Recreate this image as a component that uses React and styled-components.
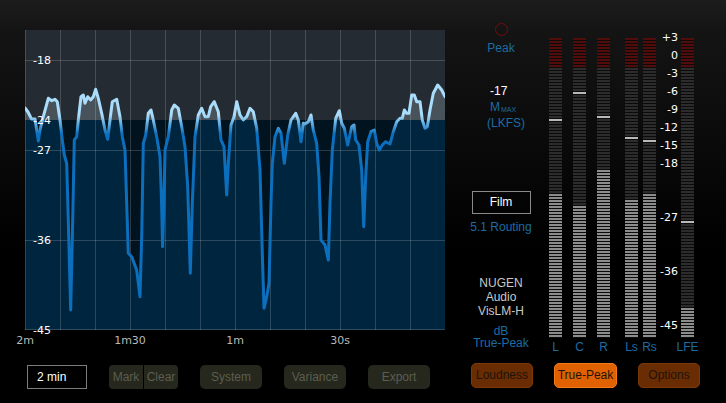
import React from "react";
import styled, { createGlobalStyle } from "styled-components";

const GlobalStyle = createGlobalStyle`
  html, body {
    margin: 0;
    padding: 0;
    background: #000;
  }
  body {
    font-family: "Liberation Sans", Arial, sans-serif;
  }
`;

// loudness history, page coordinates (chart spans x 25..445, y 30..330)
const HISTORY = [
  [25, 108], [28, 112], [31.5, 119], [35, 119], [36.7, 130], [38.3, 141], [40, 130],
  [43.3, 116.7], [48.3, 98.3], [51.7, 100.7], [55, 99.3], [57.3, 101.7], [60, 120],
  [62.3, 140], [64.3, 155], [66.7, 163.3], [68.3, 220], [70.7, 310], [72.7, 220],
  [74.3, 140], [76.7, 136.7], [78.3, 120], [81, 96.7], [83.3, 95], [85, 103.3],
  [87.7, 96.7], [90.7, 100], [93.3, 96.7], [95.7, 89.3], [98.3, 98.3], [101.7, 113.3],
  [105, 130], [107.7, 139.3], [110, 120], [112.3, 101.7], [116.7, 99.3], [120, 116.7],
  [122.3, 136.7], [125, 150], [126.7, 203.3], [128.3, 253.3], [131.7, 256.7],
  [136.7, 270], [140, 296.7], [141.7, 236.7], [143.3, 143.3], [145.7, 135],
  [148.3, 113.3], [151, 110], [153.3, 120], [156.7, 136.7], [160, 156.7],
  [161.5, 200], [162.6, 246.7], [164, 200], [165, 150], [168.3, 136.7], [171.7, 110],
  [174.3, 105], [178.3, 108.3], [181.7, 126.7], [185, 146.7], [187.7, 186.7],
  [190.3, 273.3], [192.3, 203.3], [195, 136.7], [198.3, 115], [201.7, 108.3],
  [205, 116.7], [208.3, 116.7], [210.7, 106.7], [214.3, 101.7], [218.3, 111.7],
  [221, 140], [224, 146.7], [226.7, 195], [228.3, 163.3], [231, 125], [234, 116.7],
  [236.7, 101.7], [240, 115], [243.3, 120], [246.7, 116.7], [250, 108.3],
  [253.3, 111.7], [256.7, 128.3], [260, 170], [262.3, 253.3], [264, 308.3],
  [266.7, 296.7], [269, 283.3], [271, 203.3], [272.3, 163.3], [275, 136.7],
  [278.3, 128.3], [281, 133.3], [284.3, 163.3], [287.7, 135], [291, 120],
  [295.7, 113.3], [298.3, 120], [301, 141.7], [303.3, 123.3], [305, 124],
  [308.3, 121.7], [311, 115], [313.3, 130], [316.7, 143.3], [319, 176.7], [321, 240],
  [325, 245], [328.3, 260], [330, 203.3], [332.3, 150], [335.7, 118.3],
  [339.3, 110.7], [341.7, 123.3], [344.3, 128.3], [347.7, 145], [351.7, 126.7],
  [354, 125], [355.7, 140], [359, 145], [361.7, 170], [363.7, 226.7], [365.7, 176.7],
  [367.7, 141.7], [371, 131.7], [374.3, 130], [376.7, 143.3], [379.3, 150],
  [382.3, 145], [385.7, 141.7], [390, 144], [393.3, 131.7], [396.7, 121.7],
  [400, 118.3], [402.3, 118.3], [404.3, 110], [406.7, 113.3], [409, 113.3],
  [411.7, 95], [414.3, 95], [416.7, 101.7], [420, 101.7], [422.3, 120], [425, 128.3],
  [427.3, 126.7], [430, 110], [433.3, 93.3], [437.7, 85], [441.7, 90], [445, 96.7],
];

const Y_MARKS = [
  { label: "-18", y: 61 },
  { label: "-24", y: 121 },
  { label: "-27", y: 151 },
  { label: "-36", y: 241 },
  { label: "-45", y: 331 },
];

const TIME_MARKS = ["2m", "1m30", "1m", "30s"];

const CHANNELS = [
  { name: "L", peak: 27, lit: 52, space: 0 },
  { name: "C", peak: 18, lit: 56, space: 11 },
  { name: "R", peak: 26, lit: 44, space: 11 },
  { name: "Ls", peak: 33, lit: 54, space: 15 },
  { name: "Rs", peak: 34, lit: 52, space: 5 },
];

const LFE = { name: "LFE", peak: 61, lit: 90, space: 0 };

const SCALE = [3, 0, -3, -6, -9, -12, -15, -18, -27, -36, -45];

const Chart = () => {
  const line = HISTORY.map(([x, y], i) => `${i ? "L" : "M"}${x} ${y}`).join(" ");
  const area = `${line} L445 330 L25 330 Z`;
  const cols = Array.from({ length: 11 }, (_, k) => 25 + 35 * (k + 1));
  return (
    <ChartFrame>
      <svg width="420" height="300" viewBox="25 30 420 300">
        <defs>
          <linearGradient id="areaFill" gradientUnits="userSpaceOnUse" x1="0" y1="30" x2="0" y2="330">
            <stop offset="0.3" stopColor="#48525b" />
            <stop offset="0.3" stopColor="#00253f" />
          </linearGradient>
          <linearGradient id="lineStroke" gradientUnits="userSpaceOnUse" x1="0" y1="115" x2="0" y2="134">
            <stop offset="0" stopColor="#a9ddfb" />
            <stop offset="1" stopColor="#0c6fbd" />
          </linearGradient>
        </defs>
        <rect x="25" y="30" width="420" height="90" fill="#252b32" />
        <rect x="25" y="120" width="420" height="210" fill="#00131f" />
        <path d={area} fill="url(#areaFill)" />
        <g stroke="rgba(255,255,255,0.17)" strokeWidth="1">
          {cols.map((x) => (
            <line key={x} x1={x + 0.5} y1="30" x2={x + 0.5} y2="330" />
          ))}
          {[60, 150, 240].map((y) => (
            <line key={y} x1="25" y1={y + 0.5} x2="445" y2={y + 0.5} />
          ))}
          <line x1="25.5" y1="30" x2="25.5" y2="330" />
          <line x1="25" y1="329.5" x2="445" y2="329.5" />
        </g>
        <path
          d={line}
          fill="none"
          stroke="url(#lineStroke)"
          strokeWidth="3"
          strokeLinejoin="round"
          strokeLinecap="round"
        />
      </svg>
      {Y_MARKS.map((m) => (
        <YLabel key={m.label} style={{ top: m.y - 30 - 5.8 }}>
          {m.label}
        </YLabel>
      ))}
    </ChartFrame>
  );
};

const App = () => {
  return (
    <>
      <GlobalStyle />
      <Root>
        <Main>
          <ChartColumn>
            <Chart />
            <AxisRow>
              {TIME_MARKS.map((t) => (
                <AxisTick key={t}>
                  <span>{t}</span>
                </AxisTick>
              ))}
            </AxisRow>
          </ChartColumn>

          <InfoColumn>
            <PeakLed />
            <Caption $mt={4}>Peak</Caption>
            <Reading>
              <Value>-17</Value>
              <Unit>
                M<sub>MAX</sub>
              </Unit>
              <Unit $shift={-3}>(LKFS)</Unit>
            </Reading>
            <PresetBox>Film</PresetBox>
            <Caption $mt={5}>5.1 Routing</Caption>
            <Credits>
              <div>NUGEN</div>
              <div>Audio</div>
              <div>VisLM-H</div>
            </Credits>
            <Caption $mt={7} $lh={12}>
              dB
            </Caption>
            <Caption $lh={12}>True-Peak</Caption>
          </InfoColumn>

          <MeterColumn>
            {CHANNELS.map((c) => (
              <Channel key={c.name} $space={c.space}>
                <MeterBar $peak={c.peak} $lit={c.lit} />
                <ChannelName>{c.name}</ChannelName>
              </Channel>
            ))}
            <Scale>
              {SCALE.map((db) => (
                <ScaleMark key={db} style={{ top: 12.2 - 6 * db }}>
                  {db > 0 ? `+${db}` : db}
                </ScaleMark>
              ))}
            </Scale>
            <Channel $space={LFE.space}>
              <MeterBar $peak={LFE.peak} $lit={LFE.lit} />
              <ChannelName>{LFE.name}</ChannelName>
            </Channel>
          </MeterColumn>
        </Main>

        <Footer>
          <LeftTools>
            <RangeBox>2 min</RangeBox>
            <SplitButton>
              <ToolButton $w={34}>Mark</ToolButton>
              <ToolButton $w={34}>Clear</ToolButton>
            </SplitButton>
            <ToolButton>System</ToolButton>
            <ToolButton>Variance</ToolButton>
            <ToolButton>Export</ToolButton>
          </LeftTools>
          <RightTools>
            <ModeButton>Loudness</ModeButton>
            <ModeButton $active $w={63}>
              True-Peak
            </ModeButton>
            <ModeButton>Options</ModeButton>
          </RightTools>
        </Footer>
      </Root>
    </>
  );
};
export default App;

const meterFill = ({ $peak, $lit }) => {
  const p = $peak * 3;
  const l = $lit * 3;
  return `
    repeating-linear-gradient(to bottom, transparent 0 2px, #0b0b0b 2px 3px),
    linear-gradient(to bottom,
      #530c0c 0 30px,
      #2c2c2c 30px ${p}px,
      #b9b9b9 ${p}px ${p + 3}px,
      #2c2c2c ${p + 3}px ${l}px,
      #8c8c8c ${l}px 300px)
  `;
};

const Root = styled.div`
  width: 726px;
  height: 403px;
  display: flex;
  flex-direction: column;
  overflow: hidden;
  background: linear-gradient(to bottom, #1c1c1c 0%, #141414 8%, #0a0a0a 35%, #000 62%);
`;
const Main = styled.div`
  display: flex;
  height: 365px;
  flex: none;
`;
const ChartColumn = styled.div`
  width: 460px;
  flex: none;
  box-sizing: border-box;
  padding: 30px 0 0 25px;
`;
const ChartFrame = styled.div`
  position: relative;
  width: 420px;
  height: 300px;
  svg {
    display: block;
  }
`;
const YLabel = styled.span`
  position: absolute;
  left: 8px;
  color: #fff;
  font: 11px/12px "DejaVu Sans", sans-serif;
  white-space: nowrap;
`;
const AxisRow = styled.div`
  display: flex;
  padding-top: 5px;
`;
const AxisTick = styled.div`
  width: 105px;
  flex: none;
  color: #b9b9b9;
  font: 11px/12px "DejaVu Sans", sans-serif;
  span {
    display: inline-block;
    transform: translateX(-50%);
  }
`;
const InfoColumn = styled.div`
  width: 82px;
  flex: none;
  display: flex;
  flex-direction: column;
  align-items: center;
  padding-top: 23px;
  font-size: 12px;
`;
const PeakLed = styled.div`
  width: 13px;
  height: 13px;
  box-sizing: border-box;
  border-radius: 50%;
  border: 1.5px solid #6c0e0e;
`;
const Caption = styled.div`
  color: #1c6ca3;
  line-height: ${(p) => p.$lh || 16}px;
  height: ${(p) => p.$lh || 16}px;
  margin-top: ${(p) => p.$mt || 0}px;
  white-space: nowrap;
`;
const Reading = styled.div`
  align-self: flex-start;
  padding-left: 30px;
  margin-top: 27px;
  line-height: 16px;
`;
const Value = styled.div`
  color: #fff;
`;
const Unit = styled.div`
  height: 16px;
  color: #1c6ca3;
  margin-left: ${(p) => p.$shift || 0}px;
  sub {
    font-size: 7px;
    line-height: 0;
    vertical-align: -1px;
    margin-left: 1px;
  }
`;
const PresetBox = styled.div`
  width: 59px;
  height: 23px;
  box-sizing: border-box;
  margin-top: 60px;
  border: 1px solid #8a8a8a;
  color: #fff;
  line-height: 21px;
  text-align: center;
`;
const Credits = styled.div`
  margin-top: 41px;
  color: #c9c9c9;
  line-height: 14px;
  text-align: center;
`;
const MeterColumn = styled.div`
  flex: 1;
  display: flex;
  align-items: flex-start;
  padding: 38px 0 0 7px;
`;
const Channel = styled.div`
  width: 13px;
  flex: none;
  display: flex;
  flex-direction: column;
  align-items: center;
  margin-left: ${(p) => p.$space}px;
`;
const MeterBar = styled.div`
  width: 13px;
  height: 300px;
  background: ${meterFill};
`;
const ChannelName = styled.div`
  margin-top: 1px;
  color: #1c6ca3;
  font-size: 12px;
  line-height: 16px;
  white-space: nowrap;
`;
const Scale = styled.div`
  position: relative;
  width: 25px;
  height: 300px;
  flex: none;
`;
const ScaleMark = styled.span`
  position: absolute;
  right: 3px;
  color: #fff;
  font: 11px/12px "DejaVu Sans", sans-serif;
  white-space: nowrap;
`;
const Footer = styled.div`
  display: flex;
  align-items: flex-start;
  padding-left: 27px;
`;
const LeftTools = styled.div`
  display: flex;
  gap: 22px;
`;
const RightTools = styled.div`
  display: flex;
  gap: 21px;
  margin-left: 41px;
  margin-top: -2px;
`;
const RangeBox = styled.div`
  width: 60px;
  height: 24px;
  box-sizing: border-box;
  border: 1px solid #7c7c7c;
  padding-left: 9px;
  color: #fff;
  font-size: 12px;
  line-height: 22px;
`;
const SplitButton = styled.div`
  display: flex;
  gap: 1px;
  background: #000;
  border-radius: 4px;
  overflow: hidden;
`;
const ToolButton = styled.div`
  width: ${(p) => p.$w || 62}px;
  height: 24px;
  border-radius: ${(p) => (p.$w ? 0 : 5)}px;
  background: #26271d;
  color: #5c5e4f;
  font-size: 12px;
  line-height: 24px;
  text-align: center;
`;
const ModeButton = styled.div`
  width: ${(p) => p.$w || 62}px;
  height: 25px;
  box-sizing: border-box;
  border-radius: 5px;
  border: 1px solid ${(p) => (p.$active ? "#f27b1c" : "#7a3809")};
  background: ${(p) => (p.$active ? "#e06100" : "#6a2c02")};
  color: #1f140a;
  font-size: 12px;
  line-height: 23px;
  text-align: center;
`;
